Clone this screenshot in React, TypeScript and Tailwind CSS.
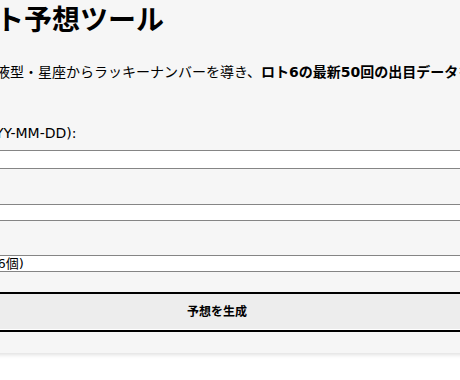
import React from 'react';

const App: React.FC = () => {
  return (
    <div
      className="w-[460px] h-[380px] overflow-hidden bg-white text-black"
      style={{ fontFamily: '"DejaVu Sans", "Noto Sans CJK JP", sans-serif' }}
    >
      <div className="ml-[-88px] w-[610px] bg-[#f6f6f6] pb-[21px] shadow-[0_2px_4px_rgba(0,0,0,0.12)]">
        {/* Header */}
        <h1 className="pt-[3px] text-[28px] leading-[36px] font-bold whitespace-nowrap">占いロト予想ツール</h1>
        <p className="mt-[23px] text-[14px] leading-[20px] whitespace-nowrap">
          生年月日・血液型・星座からラッキーナンバーを導き、
          <span className="font-bold">ロト6の最新50回の出目データ</span>
          を組み合わせて予想します。
        </p>

        {/* Form */}
        <label className="block mt-[41px] text-[14px] leading-[20px]">生年月日 (YYYY-MM-DD):</label>
        <input type="text" className="block mt-[7px] w-full h-[19px] bg-white border border-[#858585]" />

        <label className="block mt-[8px] text-[14px] leading-[20px]">血液型:</label>
        <input type="text" className="block mt-[7px] w-full h-[17px] bg-white border border-[#858585]" />

        <label className="block mt-[7px] text-[14px] leading-[20px]">星座:</label>
        <select className="block mt-[7px] w-full h-[17px] bg-white border border-[#858585] appearance-none pl-[2px] text-[13px] leading-[15px]">
          <option>ロト6 (本数字6個)</option>
        </select>

        <button className="block mt-[20px] w-full h-[40px] bg-[#ededed] border-2 border-black shadow-[inset_0_-1px_0_#ffffff] text-[12px] font-bold">
          予想を生成
        </button>
      </div>
    </div>
  );
};

export default App;
